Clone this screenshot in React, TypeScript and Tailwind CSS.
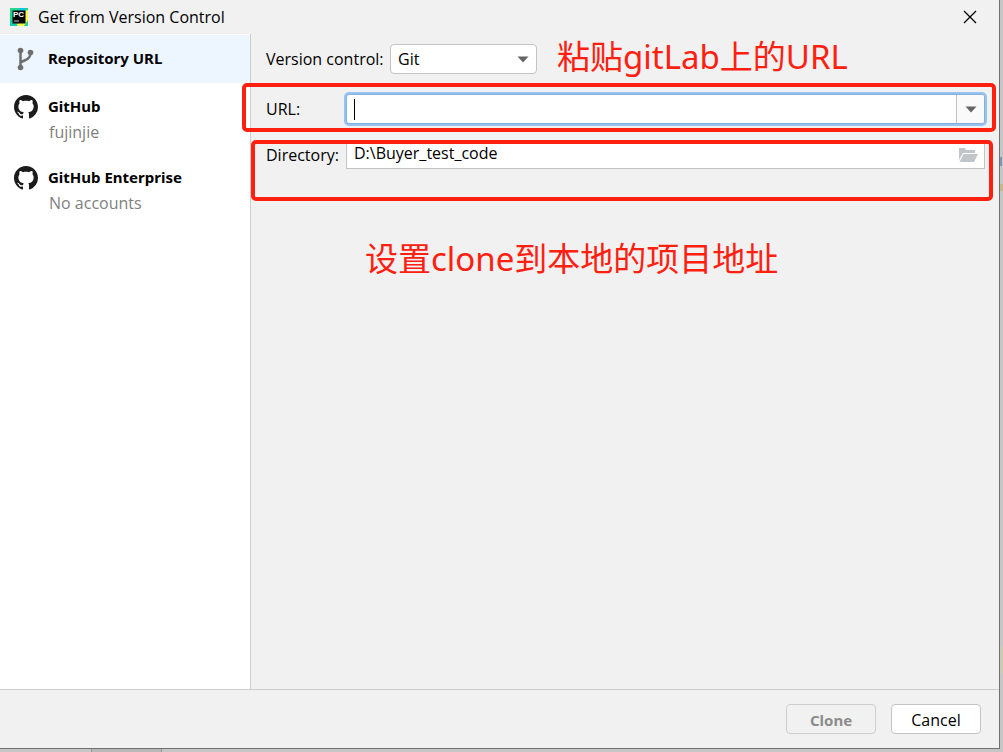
import { useState } from "react";
import type { ReactNode } from "react";

interface Source {
  name: string;
  detail?: string;
  icon: ReactNode;
}

const sources: Source[] = [
  { name: "Repository URL", icon: <BranchIcon /> },
  { name: "GitHub", detail: "fujinjie", icon: <GithubIcon /> },
  { name: "GitHub Enterprise", detail: "No accounts", icon: <GithubIcon /> },
];

function AppIcon() {
  return (
    <svg width="18" height="18" viewBox="0 0 18 18" aria-hidden="true">
      <path d="M0 0H18V18H0Z" fill="#21d789" />
      <path d="M9 0H14L18 4V8L10 6Z" fill="#07c3f2" />
      <path d="M14 3L18 2V13L14 18H6L12 8Z" fill="#fcf84a" />
      <path d="M0 11V18H8L3 14Z" fill="#12cdb4" />
      <path d="M14 18L18 12V18Z" fill="#21d789" />
      <path d="M2.500 2.500H15.500V15.500H2.500Z" fill="#000" />
      <text x="3" y="9" fontSize="8" fontWeight="700" fill="#fff" fontFamily="Liberation Sans, sans-serif">PC</text>
      <path d="M4 12.500H9V13.500H4Z" fill="#ccc" />
    </svg>
  );
}

function BranchIcon() {
  return (
    <svg width="24" height="24" viewBox="0 0 24 24" fill="none" aria-hidden="true">
      <path d="M6.500 3V21M16.500 6C16.500 11 13 12.500 7 15" stroke="#6e6e6e" strokeWidth="2.500" />
      <circle cx="6.500" cy="3.500" r="2.800" fill="#6e6e6e" />
      <circle cx="16.500" cy="5.500" r="2.800" fill="#6e6e6e" />
      <circle cx="6.500" cy="20.500" r="2.800" fill="#6e6e6e" />
    </svg>
  );
}

function GithubIcon() {
  return (
    <svg width="24" height="24" viewBox="0 0 16 16" fill="#1b1b1b" aria-hidden="true">
      <path d="M8 0C3.580 0 0 3.580 0 8c0 3.540 2.290 6.530 5.470 7.590.4.070.55-.17.55-.38 0-.19-.01-.82-.01-1.490-2.010.37-2.530-.49-2.690-.94-.09-.23-.48-.94-.82-1.130-.28-.15-.68-.52-.01-.53.63-.01 1.080.58 1.230.82.72 1.210 1.870.87 2.330.66.070-.52.28-.87.51-1.070-1.780-.2-3.640-.89-3.640-3.950 0-.87.31-1.590.82-2.150-.08-.2-.36-1.020.08-2.120 0 0 .67-.21 2.200.82.64-.18 1.320-.27 2-.27s1.360.09 2 .27c1.530-1.040 2.200-.82 2.200-.82.44 1.100.16 1.920.08 2.120.51.56.82 1.270.82 2.150 0 3.070-1.870 3.750-3.650 3.950.29.25.54.73.54 1.480 0 1.070-.01 1.930-.01 2.200 0 .21.15.46.55.38A8.010 8.010 0 0 0 16 8c0-4.420-3.580-8-8-8Z" />
    </svg>
  );
}

function FolderIcon() {
  return (
    <svg width="20" height="16" viewBox="0 0 20 16" fill="#bfc5c9" aria-hidden="true">
      <path d="M1 1H7L8 3H17V6H5L1 13Z" />
      <path d="M5.500 7H20L16 15H1.500Z" />
    </svg>
  );
}

function Triangle() {
  return (
    <svg width="12" height="7" viewBox="0 0 12 7" fill="#666" aria-hidden="true">
      <path d="M0.500 0.500H11.500L6 6.500Z" />
    </svg>
  );
}

export default function App() {
  const [selected, setSelected] = useState("Repository URL");
  const [vcs, setVcs] = useState("Git");
  const [url, setUrl] = useState("");
  const [directory, setDirectory] = useState("D:\\Buyer_test_code");

  return (
    <div className="flex min-h-screen flex-col bg-[#c6c6c6] font-['Open_Sans','Noto_Sans_CJK_SC',sans-serif] text-[16px] leading-5 text-black">
      <div className="flex flex-1">
        <div className="flex flex-1 flex-col border-r border-b border-[#707070] bg-[#f1f1f1]">
          <header className="flex h-[34px] items-center gap-[10px] pr-[22px] pl-[10px]">
            <AppIcon />
            <h1 className="flex-1">Get from Version Control</h1>
            <button aria-label="Close">
              <svg width="14" height="14" viewBox="0 0 14 14" stroke="#000" strokeWidth="1.300" aria-hidden="true">
                <path d="M1 1L13 13M13 1L1 13" />
              </svg>
            </button>
          </header>

          <div className="flex flex-1">
            <nav className="w-[251px] shrink-0 border-r border-[#cdcdcd] bg-white pt-px">
              {sources.map((s) => (
                <button
                  key={s.name}
                  onClick={() => setSelected(s.name)}
                  className={`flex w-full gap-[10px] pt-3 pl-[14px] text-left ${s.detail ? "h-[71px]" : "h-12"} ${selected === s.name ? "bg-[#edf5fe]" : ""}`}
                >
                  <span className="flex h-6 w-6 shrink-0">{s.icon}</span>
                  <span className="flex flex-col gap-[5px]">
                    <span className="font-['Noto_Sans',sans-serif] text-[15px] leading-[22px] font-bold">{s.name}</span>
                    {s.detail && <span className="pl-px text-[#808080]">{s.detail}</span>}
                  </span>
                </button>
              ))}
            </nav>

            <main className="flex-1 pt-[10px] pr-[14px] pl-[15px]">
              <div className="flex h-[30px] items-center">
                <label htmlFor="vcs" className="w-[124px]">Version control:</label>
                <div className="relative">
                  <select
                    id="vcs"
                    value={vcs}
                    onChange={(e) => setVcs(e.target.value)}
                    className="h-[30px] w-[147px] appearance-none rounded-[4px] border border-[#c4c4c4] bg-white pl-[7px]"
                  >
                    <option>Git</option>
                    <option>Mercurial</option>
                    <option>Subversion</option>
                  </select>
                  <span className="pointer-events-none absolute top-3 right-2">
                    <Triangle />
                  </span>
                </div>
                <p className="ml-5 pb-1 font-['Noto_Sans','Noto_Sans_CJK_SC',sans-serif] text-[33px] leading-8 whitespace-nowrap text-[#ff2010]">粘贴gitLab上的URL</p>
              </div>

              <div className="relative mt-5 flex h-[30px] items-center">
                <label htmlFor="url" className="w-20">URL:</label>
                <div className="flex h-[30px] flex-1 items-center rounded-[3px] border border-[#87afda] bg-white pl-[7px] ring-2 ring-[#97c3f3]">
                  <span className="h-[21px] w-px bg-black" />
                  <input
                    id="url"
                    value={url}
                    onChange={(e) => setUrl(e.target.value)}
                    className="h-7 min-w-0 flex-1 outline-none"
                  />
                  <button aria-label="Recent URLs" className="flex h-7 w-7 items-center justify-center rounded-r-[2px] border-l border-[#c4c4c4] bg-[#fafafa]">
                    <Triangle />
                  </button>
                </div>
                <div className="pointer-events-none absolute -top-[11px] -right-[11px] -bottom-2 -left-6 rounded-[5px] border-4 border-[#ff2010]" />
              </div>

              <div className="relative mt-4 flex h-[29px] items-center">
                <label htmlFor="directory" className="w-20">Directory:</label>
                <div className="flex h-[29px] flex-1 items-center border border-[#c4c4c4] bg-white pr-[6px] pl-[7px]">
                  <input
                    id="directory"
                    value={directory}
                    onChange={(e) => setDirectory(e.target.value)}
                    className="h-7 min-w-0 flex-1 pb-1 outline-none"
                  />
                  <button aria-label="Browse">
                    <FolderIcon />
                  </button>
                </div>
                <div className="pointer-events-none absolute top-0 -right-2 -bottom-8 -left-[15px] rounded-[5px] border-4 border-[#ff2010]" />
              </div>

              <p className="mt-[70px] pl-[99px] font-['Noto_Sans','Noto_Sans_CJK_SC',sans-serif] text-[33px] leading-10 whitespace-nowrap text-[#ff2010]">设置clone到本地的项目地址</p>
            </main>
          </div>

          <footer className="flex h-[59px] items-center justify-end gap-[15px] border-t border-[#cdcdcd] pr-[18px]">
            <button disabled className="h-[30px] w-[90px] rounded-[4px] border border-[#cfcfcf] pt-px font-['Noto_Sans',sans-serif] text-[15px] font-bold text-[#8c8c8c]">Clone</button>
            <button className="h-[30px] w-[90px] rounded-[4px] border border-[#c4c4c4] bg-white pt-px">Cancel</button>
          </footer>
        </div>

        {/* sliver of the window behind, right side */}
        <div className="flex w-[3px] flex-col pt-[157px]">
          <span className="h-[9px] w-[2px] bg-[#8296b0]" />
          <span className="mt-[18px] h-[7px] bg-[#c8b592]" />
          <span className="mt-auto mb-[76px] h-[26px] bg-[#cccab4]" />
        </div>
      </div>

      {/* and its status bar along the bottom */}
      <div className="flex h-[3px] pl-[91px]">
        <span className="w-[71px] border-x border-[#999] bg-[#b8b8b8]" />
      </div>
    </div>
  );
}
